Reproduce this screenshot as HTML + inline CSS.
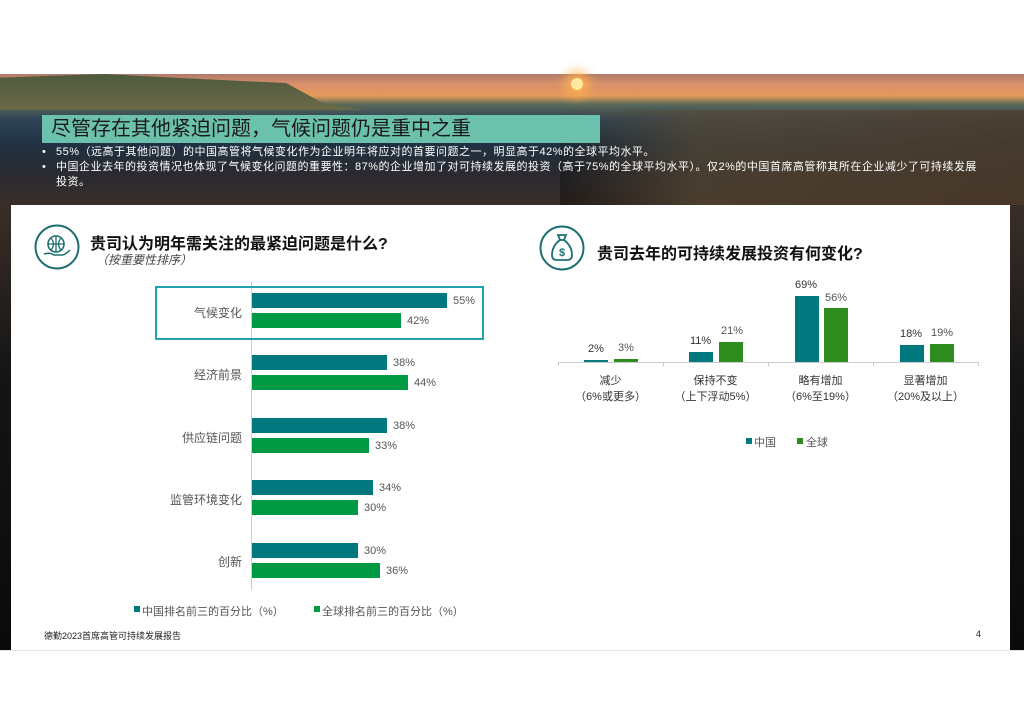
<!DOCTYPE html>
<html><head><meta charset="utf-8"><style>
*{margin:0;padding:0;box-sizing:border-box}
body{width:1024px;height:724px;background:#fff;position:relative;overflow:hidden;font-family:"Liberation Sans","Noto Sans CJK SC",sans-serif}
.abs{position:absolute}
#photo{left:0;top:74px;width:1024px;height:576px;background:
linear-gradient(180deg,rgba(0,0,0,0) 0,rgba(0,0,0,0) 130px,#151515 300px,#0a0a0a 576px),
linear-gradient(180deg,#b07a6a 0,#d8906a 10px,#e49a5a 22px,#5b6a5a 30px,#2f4455 45px,#1f3142 70px,#2a2a30 100px,#3a2e28 131px);}
#hills{left:0;top:74px;width:520px;height:36px;background:linear-gradient(180deg,#4e5a3e,#6a6a48);clip-path:polygon(0 10%,20% 0,40% 15%,55% 25%,62% 80%,70% 100%,0 100%)}
#sun{left:571px;top:78px;width:12px;height:12px;border-radius:50%;background:#ffe9a0;box-shadow:0 0 12px 6px #ffb050}
#rfield{left:560px;top:110px;width:464px;height:95px;background:linear-gradient(90deg,rgba(90,75,55,0),rgba(90,75,55,.7) 30%,rgba(80,62,45,.8)),linear-gradient(180deg,rgba(0,0,0,0),rgba(0,0,0,.4))}
#title{left:42px;top:115px;width:558px;height:28px;background:#6cc1ad;font-size:20px;color:#1a1a1a;padding-left:9px;line-height:28px}
.bul{color:#fff;font-size:11px;line-height:14.5px;left:42px;width:945px;letter-spacing:.5px}
.bul span{position:absolute;left:0}
#card{left:11px;top:205px;width:999px;height:445px;background:#fff}
.txt{font-size:11px;color:#555;white-space:nowrap}
.h{font-size:16px;font-weight:bold;color:#111;white-space:nowrap}
.t{background:#00787e}.g{background:#009a44}.g2{background:#2e8b1e}
</style></head><body>
<div id="photo" class="abs"></div>
<div id="rfield" class="abs"></div>
<div id="hills" class="abs"></div>
<div id="sun" class="abs"></div>
<div id="title" class="abs">尽管存在其他紧迫问题，气候问题仍是重中之重</div>
<div class="abs bul" style="top:145px"><span>•</span><div style="padding-left:14px">55%（远高于其他问题）的中国高管将气候变化作为企业明年将应对的首要问题之一，明显高于42%的全球平均水平。</div></div>
<div class="abs bul" style="top:160px"><span>•</span><div style="padding-left:14px">中国企业去年的投资情况也体现了气候变化问题的重要性：87%的企业增加了对可持续发展的投资（高于75%的全球平均水平）。仅2%的中国首席高管称其所在企业减少了可持续发展投资。</div></div>
<div id="card" class="abs"></div>

<svg class="abs" style="left:34px;top:224px" width="46" height="46" viewBox="0 0 46 46" fill="none" stroke="#1d6e70" stroke-width="2"><circle cx="23" cy="23" r="21.5"/><circle cx="22" cy="20" r="8" stroke-width="1.6"/><path d="M14 20h16M22 12v16M17 14q5 6 0 12M27 14q-5 6 0 12" stroke-width="1.3"/><path d="M10 30q6-2 10 1h8q3 0 8-5" stroke-width="1.5"/></svg>
<div class="abs h" style="left:90px;top:230px">贵司认为明年需关注的最紧迫问题是什么?</div>
<div class="abs txt" style="left:96px;top:251px;font-style:italic;font-size:12px;color:#444">（按重要性排序）</div>

<svg class="abs" style="left:539px;top:225px" width="46" height="46" viewBox="0 0 46 46" fill="none" stroke="#1d6e70" stroke-width="2"><circle cx="23" cy="23" r="21.5"/><path d="M19 10h8l-2 5h-4zM21 15q-8 6-8 15q0 5 5 5h10q5 0 5-5q0-9-8-15" stroke-width="1.8"/><text x="23" y="31" font-size="11" font-weight="bold" fill="#1d6e70" stroke="none" text-anchor="middle" font-family="Liberation Sans">$</text></svg>
<div class="abs h" style="left:597px;top:240px">贵司去年的可持续发展投资有何变化?</div>

<div class="abs" style="left:251px;top:282px;width:1px;height:308px;background:#ccc"></div>
<div class="abs" style="left:155px;top:286px;width:329px;height:54px;border:2px solid #1fa3b0"></div>
<div class="abs t" style="left:252px;top:293px;width:195px;height:15px"></div><div class="abs txt" style="left:453px;top:295px">55%</div>
<div class="abs g" style="left:252px;top:313px;width:149px;height:15px"></div><div class="abs txt" style="left:407px;top:315px">42%</div>
<div class="abs txt" style="left:190px;top:304px;font-size:12px;width:52px;text-align:right">气候变化</div>

<div class="abs t" style="left:252px;top:355px;width:135px;height:15px"></div><div class="abs txt" style="left:393px;top:357px">38%</div>
<div class="abs g" style="left:252px;top:375px;width:156px;height:15px"></div><div class="abs txt" style="left:414px;top:377px">44%</div>
<div class="abs txt" style="left:180px;top:366px;font-size:12px;width:62px;text-align:right">经济前景</div>

<div class="abs t" style="left:252px;top:418px;width:135px;height:15px"></div><div class="abs txt" style="left:393px;top:420px">38%</div>
<div class="abs g" style="left:252px;top:438px;width:117px;height:15px"></div><div class="abs txt" style="left:375px;top:440px">33%</div>
<div class="abs txt" style="left:170px;top:429px;font-size:12px;width:72px;text-align:right">供应链问题</div>

<div class="abs t" style="left:252px;top:480px;width:121px;height:15px"></div><div class="abs txt" style="left:379px;top:482px">34%</div>
<div class="abs g" style="left:252px;top:500px;width:106px;height:15px"></div><div class="abs txt" style="left:364px;top:502px">30%</div>
<div class="abs txt" style="left:160px;top:491px;font-size:12px;width:82px;text-align:right">监管环境变化</div>

<div class="abs t" style="left:252px;top:543px;width:106px;height:15px"></div><div class="abs txt" style="left:364px;top:545px">30%</div>
<div class="abs g" style="left:252px;top:563px;width:128px;height:15px"></div><div class="abs txt" style="left:386px;top:565px">36%</div>
<div class="abs txt" style="left:180px;top:553px;font-size:12px;width:62px;text-align:right">创新</div>

<div class="abs t" style="left:134px;top:606px;width:6px;height:6px"></div><div class="abs txt" style="left:142px;top:603px">中国排名前三的百分比（%）</div>
<div class="abs g" style="left:314px;top:606px;width:6px;height:6px"></div><div class="abs txt" style="left:322px;top:603px">全球排名前三的百分比（%）</div>
<div class="abs txt" style="left:44px;top:629px;font-size:9px;color:#222">德勤2023首席高管可持续发展报告</div>
<div class="abs txt" style="left:976px;top:629px;font-size:9px;color:#222">4</div>

<div class="abs" style="left:558px;top:362px;width:420px;height:1px;background:#ccc"></div>
<div class="abs" style="left:558px;top:362px;width:1px;height:4px;background:#ccc"></div>
<div class="abs" style="left:663px;top:362px;width:1px;height:4px;background:#ccc"></div>
<div class="abs" style="left:768px;top:362px;width:1px;height:4px;background:#ccc"></div>
<div class="abs" style="left:873px;top:362px;width:1px;height:4px;background:#ccc"></div>
<div class="abs" style="left:978px;top:362px;width:1px;height:4px;background:#ccc"></div>

<div class="abs t" style="left:584px;top:360px;width:24px;height:2px"></div>
<div class="abs g2" style="left:614px;top:359px;width:24px;height:3px"></div>
<div class="abs t" style="left:689px;top:352px;width:24px;height:10px"></div>
<div class="abs g2" style="left:719px;top:342px;width:24px;height:20px"></div>
<div class="abs t" style="left:795px;top:296px;width:24px;height:66px"></div>
<div class="abs g2" style="left:824px;top:308px;width:24px;height:54px"></div>
<div class="abs t" style="left:900px;top:345px;width:24px;height:17px"></div>
<div class="abs g2" style="left:930px;top:344px;width:24px;height:18px"></div>

<div class="abs txt" style="left:588px;top:343px;color:#333">2%</div>
<div class="abs txt" style="left:618px;top:342px">3%</div>
<div class="abs txt" style="left:690px;top:335px;color:#333">11%</div>
<div class="abs txt" style="left:721px;top:325px">21%</div>
<div class="abs txt" style="left:795px;top:279px;color:#333">69%</div>
<div class="abs txt" style="left:825px;top:292px">56%</div>
<div class="abs txt" style="left:900px;top:328px;color:#333">18%</div>
<div class="abs txt" style="left:931px;top:327px">19%</div>

<div class="abs txt" style="left:558px;top:373px;width:105px;text-align:center;color:#333;line-height:16px">减少<br>（6%或更多）</div>
<div class="abs txt" style="left:663px;top:373px;width:105px;text-align:center;color:#333;line-height:16px">保持不变<br>（上下浮动5%）</div>
<div class="abs txt" style="left:768px;top:373px;width:105px;text-align:center;color:#333;line-height:16px">略有增加<br>（6%至19%）</div>
<div class="abs txt" style="left:873px;top:373px;width:105px;text-align:center;color:#333;line-height:16px">显著增加<br>（20%及以上）</div>
<div class="abs t" style="left:746px;top:438px;width:6px;height:6px"></div><div class="abs txt" style="left:754px;top:434px">中国</div>
<div class="abs g2" style="left:797px;top:438px;width:6px;height:6px"></div><div class="abs txt" style="left:806px;top:434px">全球</div>
<div class="abs" style="left:0;top:650px;width:1024px;height:1px;background:#e4e4e4"></div>
</body></html>
